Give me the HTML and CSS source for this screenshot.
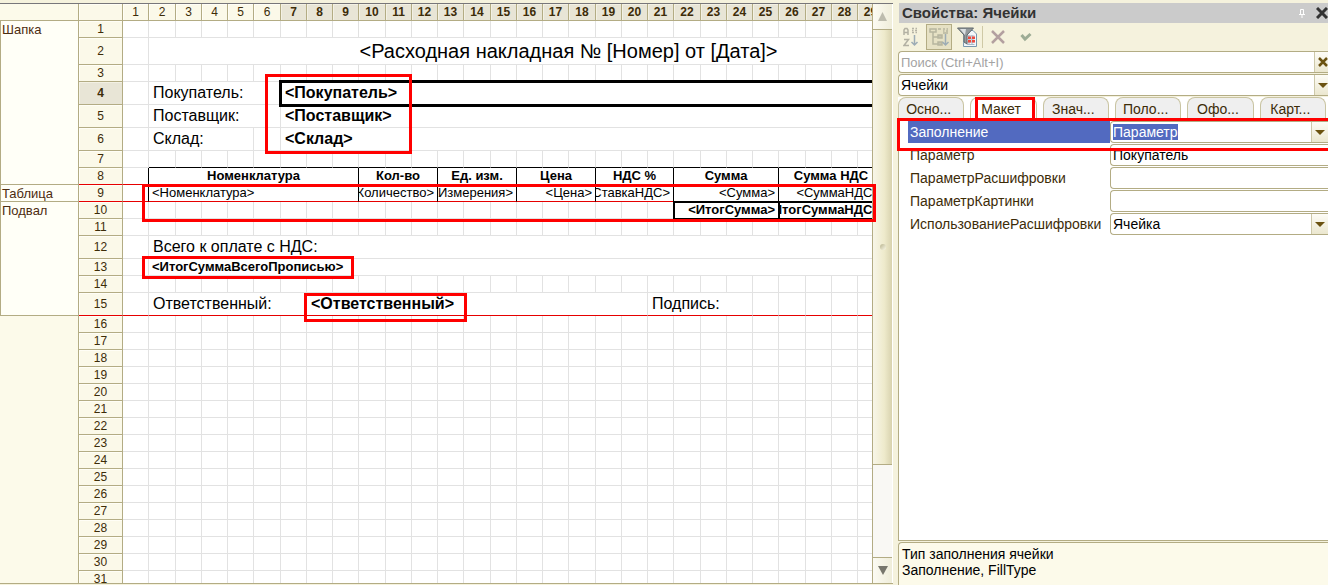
FILE: index.html
```html
<!DOCTYPE html>
<html lang="ru">
<head>
<meta charset="utf-8">
<title>Свойства: Ячейки</title>
<link rel="stylesheet" href="styles.css">
</head>
<body>
<div class="app">
  <main class="editor">
    <div class="sheet-view">
      <table class="sheet" id="sheet"></table>
    </div>
    <div class="scrollbar">
      <button class="scroll-btn scroll-up" aria-label="Вверх"><svg width="9" height="9" viewBox="0 0 10 10"><path d="M5 0L10 10H0Z" fill="#bdbcae"/></svg></button>
      <div class="scroll-thumb"><i class="grip"></i></div>
      <div class="scroll-track"></div>
      <button class="scroll-btn scroll-down" aria-label="Вниз"><svg width="10" height="9" viewBox="0 0 10 9"><path d="M0 0H10L5 9Z" fill="#77766c"/></svg></button>
    </div>
    <div class="mark mark-parties"></div>
    <div class="mark mark-table"></div>
    <div class="mark mark-total"></div>
    <div class="mark mark-person"></div>
  </main>

  <aside class="props">
    <header class="props-title">
      <h1>Свойства: Ячейки</h1>
      <button class="plain" aria-label="Закрепить"><svg width="6" height="9" viewBox="0 0 6 9"><path d="M1.5 5V.5H4.500V5M0 5.500H6M3 6V9" fill="none" stroke="#fff"/></svg></button>
      <button class="plain" aria-label="Закрыть"><svg width="12" height="12" viewBox="0 0 12 12"><path d="M1 1L11 11M11 1L1 11" stroke="#333" stroke-width="3"/></svg></button>
    </header>

    <div class="toolbar">
      <button class="tool" aria-label="По алфавиту"><svg width="16" height="20" viewBox="0 0 16 20" fill="none" stroke="#b3b1a3" stroke-width="1.500"><path d="M1 8V3L2 1.500H4L5 3V8M1 5.500H5M1 12.500H5.500L1 18.500H6"/><path d="M11.500 8V18M8.500 15L11.500 18L14.500 15" stroke="#9dacb5"/><path d="M9 1.500H11M12.500 1.500H14M9 3.500H10.500M12 3.500H14M9 5.500H11M12.500 5.500H14" stroke="#b5b3a6"/></svg></button>
      <button class="tool pressed" aria-label="По категориям"><svg width="20" height="20" viewBox="0 0 20 20" fill="none" stroke="#b7b59e" stroke-width="1.500"><path d="M1 2H7V5H1ZM4 5V17H9M4 10H9" /><path d="M9 8H13V11H9ZM9 15H13V18H9Z" fill="#c4c2ad"/><path d="M16.500 7V18M13.500 15L16.500 18L19.500 15" stroke="#9dacb5"/><path d="M9 2H12M14 2H16M17.500 2H19M14 4H15.500M17 4H19M14 6H19"/></svg></button>
      <button class="tool" aria-label="Отбор"><svg width="20" height="20" viewBox="0 0 20 20"><path d="M7 3.500H16L19.500 7V19.500H6.500Z" fill="#f4f8fb" stroke="#7796ad"/><path d="M10 9H17.500M10 12H17.500M10 15H17.500M10 17.500H17.500M12 8V18M15 8V18" stroke="#a8b7c6"/><path d="M11 9.500H14V12H11ZM15 9.500H18V12H15ZM11 13H14V15.500H11ZM15 13H18V15.500H15Z" fill="#ef4b3e"/><path d="M.5 1H16.500L10 8V17L7 15V8Z" fill="#93999c" stroke="#5e666b"/><path d="M3 2H9L8 8Z" fill="#dce0e2"/></svg></button>
      <span class="divider"></span>
      <button class="tool" aria-label="Отменить"><svg width="14" height="14" viewBox="0 0 14 14"><path d="M1 1L13 13M13 1L1 13" stroke="#b3a0a0" stroke-width="2.500"/></svg></button>
      <button class="tool" aria-label="Применить"><svg width="12" height="10" viewBox="0 0 12 10"><path d="M1.500 3L5 7L10.500 2" fill="none" stroke="#9dac95" stroke-width="3"/></svg></button>
    </div>

    <div class="field">
      <input class="field-value search" type="text" placeholder="Поиск (Ctrl+Alt+I)" aria-label="Поиск">
      <button class="field-btn" aria-label="Очистить"><svg width="10" height="10" viewBox="0 0 10 10"><path d="M1 1L9 9M9 1L1 9" stroke="#6b5210" stroke-width="2.500"/></svg></button>
    </div>
    <div class="field">
      <select class="field-value" aria-label="Объект"><option>Ячейки</option></select>
      <span class="field-btn"><svg width="10" height="5" viewBox="0 0 10 5"><path d="M0 0H10L5 5Z" fill="#6b5210"/></svg></span>
    </div>

    <nav class="tabs">
      <button class="tab">Осно...</button>
      <button class="tab active">Макет<span class="mark mark-tab"></span></button>
      <button class="tab">Знач...</button>
      <button class="tab">Поло...</button>
      <button class="tab">Офо...</button>
      <button class="tab">Карт...</button>
    </nav>

    <section class="prop-list">
      <div class="prop current">
        <label for="p1">Заполнение</label>
        <div class="field">
          <select id="p1" class="field-value highlighted"><option>Параметр</option></select>
          <span class="field-btn"><svg width="10" height="5" viewBox="0 0 10 5"><path d="M0 0H10L5 5Z" fill="#6b5210"/></svg></span>
        </div>
        <span class="mark mark-prop"></span>
      </div>
      <div class="prop">
        <label for="p2">Параметр</label>
        <div class="field"><input id="p2" class="field-value" type="text" value="Покупатель"></div>
      </div>
      <div class="prop">
        <label for="p3">ПараметрРасшифровки</label>
        <div class="field"><input id="p3" class="field-value" type="text"></div>
      </div>
      <div class="prop">
        <label for="p4">ПараметрКартинки</label>
        <div class="field"><input id="p4" class="field-value" type="text"></div>
      </div>
      <div class="prop">
        <label for="p5">ИспользованиеРасшифровки</label>
        <div class="field">
          <select id="p5" class="field-value"><option>Ячейка</option></select>
          <span class="field-btn"><svg width="10" height="5" viewBox="0 0 10 5"><path d="M0 0H10L5 5Z" fill="#6b5210"/></svg></span>
        </div>
      </div>
    </section>

    <footer class="hint">
      <p>Тип заполнения ячейки</p>
      <p>Заполнение, FillType</p>
    </footer>
  </aside>
</div>
<script src="sheet.js"></script>
</body>
</html>
```
FILE: sheet.js
```js
const COLS = 33;
const NUMBERED_COLS = 29;
const ROWS = 31;
const TALL = { 2: 'row-title', 4: 'row-tall', 5: 'row-tall', 6: 'row-tall', 12: 'row-tall', 15: 'row-tall' };

// Sections: first row -> [rows spanned, name]
const SECTIONS = { 1: [8, 'Шапка'], 9: [1, 'Таблица'], 10: [6, 'Подвал'], 16: [ROWS - 15, ''] };

// Merged cells: row -> [first column, last column, text, classes]
const MERGED = {
  2: [[2, 33, '<Расходная накладная № [Номер] от [Дата]>', 'title']],
  4: [[2, 6, 'Покупатель:', 'big'], [7, 33, '<Покупатель>', 'big bold selected']],
  5: [[2, 6, 'Поставщик:', 'big'], [7, 33, '<Поставщик>', 'big bold']],
  6: [[2, 5, 'Склад:', 'big'], [7, 33, '<Склад>', 'big bold']],
  8: [[2, 9, 'Номенклатура', 'head'], [10, 12, 'Кол-во', 'head'], [13, 15, 'Ед. изм.', 'head'],
      [16, 18, 'Цена', 'head'], [19, 21, 'НДС %', 'head'], [22, 25, 'Сумма', 'head'], [26, 29, 'Сумма НДС', 'head']],
  9: [[2, 9, '<Номенклатура>', 'body'], [10, 12, '<Количество>', 'body right'], [13, 15, '<ЕдиницаИзмерения>', 'body right'],
      [16, 18, '<Цена>', 'body right'], [19, 21, '<СтавкаНДС>', 'body right'], [22, 25, '<Сумма>', 'body right'],
      [26, 29, '<СуммаНДС>', 'body right']],
  10: [[22, 25, '<ИтогСумма>', 'right bold total'], [26, 29, '<ИтогСуммаНДС>', 'right bold total']],
  12: [[2, 33, 'Всего к оплате с НДС:', 'big']],
  13: [[2, 33, '<ИтогСуммаВсегоПрописью>', 'bold']],
  15: [[2, 7, 'Ответственный:', 'big'], [8, 20, '<Ответственный>', 'big bold'], [21, 24, 'Подпись:', 'big']]
};

const table = document.getElementById('sheet');

function add(parent, tag, className, text) {
  const node = document.createElement(tag);
  if (className) node.className = className;
  if (text) node.textContent = text;
  parent.append(node);
  return node;
}

const group = add(table, 'colgroup');
add(group, 'col', 'col-section');
add(group, 'col', 'col-number');
for (let c = 1; c <= COLS; c++) add(group, 'col', c % 4 === 2 ? 'col-wide' : 'col');

const head = add(table, 'tr');
add(head, 'th', 'corner');
add(head, 'th', 'hdr');
for (let c = 1; c <= COLS; c++) {
  add(head, 'th', c >= 7 ? 'hdr on' : 'hdr', c <= NUMBERED_COLS ? String(c) : '');
}

for (let r = 1; r <= ROWS; r++) {
  const ends = r === 8 || r === 9 || r === 15;
  const row = add(table, 'tr', [TALL[r] || '', ends ? 'section-end' : ''].join(' ').trim());
  if (SECTIONS[r]) {
    const cell = add(row, 'th', SECTIONS[r][1] ? 'section' : 'section blank', SECTIONS[r][1]);
    cell.rowSpan = SECTIONS[r][0];
  }
  add(row, 'th', r === 4 ? 'hdr on' : 'hdr', String(r));
  const merged = MERGED[r] || [];
  for (let c = 1; c <= COLS; c++) {
    const m = merged.find(item => item[0] === c);
    if (m) {
      const cell = add(row, 'td', m[3]);
      cell.colSpan = m[1] - m[0] + 1;
      add(cell, 'div', 'text', m[2]);
      c = m[1];
    } else {
      let cls = '';
      if (r === 7 && c >= 2 && c <= 29) cls = 'edge-bottom';
      if ((r === 8 || r === 9) && c === 1) cls = 'edge-right';
      add(row, 'td', cls);
    }
  }
}
```
FILE: styles.css
```css
* { box-sizing: border-box; }

body {
  margin: 0;
  background: #f5f2dd;
  font-family: "Liberation Sans", Arial, sans-serif;
  font-size: 13px;
  color: #000;
}

button, input, select { font: inherit; color: inherit; margin: 0; }

.app { display: flex; height: 100vh; overflow: hidden; }

/* Spreadsheet */
.editor {
  position: relative;
  flex: 1;
  min-width: 0;
  display: flex;
  margin: 3px 0 1px;
  border-top: 1px solid #77767a;
  border-bottom: 1px solid #b3ac84;
  overflow: hidden;
}

.sheet-view { flex: 1; min-width: 0; overflow: hidden; background: #fff; }

.sheet {
  table-layout: fixed;
  width: 988px;
  border-collapse: separate;
  border-spacing: 0;
  font-size: 13px;
  line-height: 16px;
}
.col-section { width: 79px; }
.col-number { width: 44px; }
.col { width: 26px; }
.col-wide { width: 27px; }

.sheet tr { height: 17px; }
.sheet .row-title { height: 27px; }
.sheet .row-tall { height: 23px; }

.sheet th, .sheet td { padding: 0; white-space: nowrap; overflow: hidden; font-weight: normal; }
.sheet td {
  border-right: 1px solid #e2e2e2;
  border-bottom: 1px solid #e2e2e2;
  padding: 0 3px;
}
.sheet .hdr {
  background: #fbf9e9;
  border-right: 1px solid #b3ac84;
  border-bottom: 1px solid #b3ac84;
  box-shadow: inset 1px 1px #fffef6;
  font-size: 12px;
  color: #3d2c08;
}
.sheet .hdr.on { background: #e8e5d6; font-weight: bold; box-shadow: inset 1px 1px #f3f1e4; }
.sheet .corner { background: #fcfaea; border-right: 1px solid #b3ac84; border-bottom: 1px solid #b3ac84; }
.sheet .section {
  background: #fffff7;
  border: solid #b3ac84;
  border-width: 0 1px 1px 1px;
  padding: 1px 1px 0;
  line-height: 15px;
  text-align: left;
  vertical-align: top;
  color: #4d2c10;
}
.sheet .blank { background: #fcfaea; border-left: 0; }
.sheet .section-end td, .sheet .section-end .hdr { border-bottom-color: #e60000; }

.text { display: flex; }
.right .text { justify-content: flex-end; }
.title .text { justify-content: center; font-size: 20px; line-height: 24px; }
.big .text { font-size: 16px; line-height: 22px; padding-left: 1px; }
.bold .text { font-weight: bold; }
.sheet td.head, .sheet td.body { border-right-color: #000; }
.head .text { justify-content: center; font-weight: bold; }
.sheet .edge-bottom { border-bottom-color: #000; }
.sheet .edge-right { border-right-color: #000; }
.selected { outline: 3px solid #000; outline-offset: -1px; }
.total { outline: 2px solid #000; outline-offset: -1px; }

.scrollbar {
  width: 21px;
  display: flex;
  flex-direction: column;
  border-left: 1px solid #b3ac84;
  border-right: 1px solid #fff;
  background: #f9f8f4;
}
.scroll-btn {
  height: 26px;
  padding: 0;
  border: 0;
  display: flex;
  align-items: center;
  justify-content: center;
  background: linear-gradient(90deg, #fcfbf3, #efedda);
}
.scroll-up { border-bottom: 1px solid #b3ac84; }
.scroll-down { border-top: 1px solid #b3ac84; }
.scroll-thumb {
  flex: 435;
  display: flex;
  align-items: center;
  justify-content: center;
  background: linear-gradient(90deg, #f8f6e8, #eeeacb 60%, #d8d2ae);
  border-bottom: 1px solid #b3ac84;
}
.scroll-track { flex: 92; }
.grip { width: 6px; height: 6px; border-radius: 3px; background: linear-gradient(135deg, #b9b48f, #fbf9e8); }

/* Highlight frames */
.mark { position: absolute; border: 3px solid #f00; pointer-events: none; }
.mark-parties { left: 265px; top: 70px; width: 147px; height: 80px; }
.mark-table { left: 142px; top: 180px; right: 17px; height: 38px; }
.mark-total { left: 142px; top: 252px; width: 212px; height: 23px; }
.mark-person { left: 304px; top: 289px; width: 163px; height: 29px; }
.mark-tab { inset: -1px 1px -2px 4px; }
.mark-prop { inset: -3px -3px -8px -2px; z-index: 1; }

/* Properties panel */
.props {
  width: 435px;
  flex: none;
  padding: 3px 0 0 5px;
  display: flex;
  flex-direction: column;
  font-size: 14px;
}
.props-title {
  height: 20px;
  flex: none;
  margin-left: 1px;
  padding: 0 0 0 3px;
  display: flex;
  align-items: center;
  background: #cbcbcb;
}
.props-title h1 { flex: 1; margin: 0; font-size: 15px; line-height: 18px; color: #333; }
.plain { border: 0; background: none; padding: 0; display: flex; margin-left: 11px; }

.toolbar { height: 28px; flex: none; display: flex; align-items: center; gap: 2px; }
.tool {
  height: 26px;
  width: 26px;
  padding: 0;
  border: 1px solid transparent;
  background: none;
  display: flex;
  align-items: center;
  justify-content: center;
}
.tool.pressed { background: #e6e1c4; border-color: #b3ac84; }
.divider { width: 1px; height: 22px; background: #cfc9a6; }

.field {
  display: flex;
  align-items: stretch;
  justify-content: space-between;
  height: 22px;
  flex: none;
  background: #fff;
  border: solid #b3ac84;
  border-width: 1px 0 1px 1px;
  border-radius: 4px 0 0 4px;
  overflow: hidden;
}
.props > .field { margin-bottom: 1px; }
.field-value {
  flex: 1;
  min-width: 0;
  border: 0;
  padding: 0 2px;
  background: none;
  appearance: none;
  outline: 0;
  border-radius: 0;
}
.search { font-size: 13px; }
.field-value::placeholder { color: #a3a3a3; opacity: 1; }
.field-value.highlighted { flex: none; margin: 2px; padding: 0; background: #526ac0; color: #fff; }
.field-btn {
  width: 14px;
  padding: 0;
  border: 0;
  border-left: 1px solid #cdc8a9;
  background: linear-gradient(#fdfcf6, #ebe7cf);
  display: flex;
  align-items: center;
  justify-content: flex-end;
}
.prop .field-btn { width: 17px; justify-content: center; }

.tabs { display: flex; gap: 6px; padding-right: 2px; background: #fff; height: 22px; flex: none; }
.tab {
  position: relative;
  flex: 1 1 66px;
  padding: 0 5px 0 0;
  background: #efefef;
  border: 1px solid #c9c4a2;
  border-bottom: 0;
  border-radius: 8px 8px 0 0;
  color: #3d2c08;
}
.tab.active { background: #fff; }

.prop-list {
  flex: 1;
  min-height: 0;
  padding: 2px 0 0;
  background: #fff;
  border-left: 1px solid #b3ac84;
  border-bottom: 1px solid #b3ac84;
}
.prop {
  position: relative;
  display: grid;
  grid-template-columns: 202px 1fr;
  margin-bottom: 1px;
  padding-left: 9px;
}
.prop label { padding-left: 2px; line-height: 22px; color: #3d2c08; }
.current label { background: #526ac0; color: #fff; }

.hint {
  flex: none;
  height: 43px;
  margin-top: 1px;
  padding: 3px;
  background: #fcfaea;
  border: solid #b3ac84;
  border-width: 1px 0 0 1px;
  border-radius: 4px 0 0 0;
}
.hint p { margin: 0; line-height: 16px; }
```
